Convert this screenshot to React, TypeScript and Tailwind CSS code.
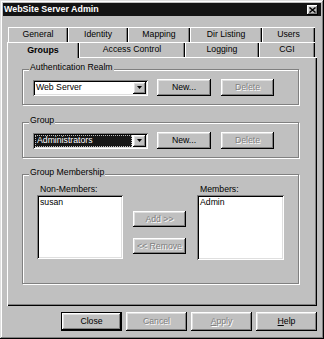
import React from "react";

const RAISED =
  "shadow-[inset_-1px_-1px_0_#000,inset_1px_1px_0_#fff,inset_-2px_-2px_0_#808080,inset_2px_2px_0_#dfdfdf]";
const SUNKEN =
  "shadow-[inset_1px_1px_0_#808080,inset_-1px_-1px_0_#fff,inset_2px_2px_0_#000,inset_-2px_-2px_0_#dfdfdf]";
const WIN =
  "shadow-[inset_-1px_-1px_0_#000,inset_1px_1px_0_#dfdfdf,inset_-2px_-2px_0_#808080,inset_2px_2px_0_#fff]";
const TAB =
  "shadow-[inset_1px_1px_0_#fff,inset_-1px_0_0_#000,inset_-2px_0_0_#808080]";
const PANEL =
  "shadow-[inset_1px_1px_0_#fff,inset_-1px_-1px_0_#000,inset_-2px_-2px_0_#808080]";
const DIS = "text-[#808080] [text-shadow:1px_1px_0_#fff]";

function Btn({
  label,
  w,
  h,
  disabled,
}: {
  label: React.ReactNode;
  w: string;
  h: string;
  disabled?: boolean;
}) {
  return (
    <div
      className={`${w} ${h} bg-[#c0c0c0] ${RAISED} flex items-center justify-center leading-none ${
        disabled ? DIS : "text-black"
      }`}
    >
      {label}
    </div>
  );
}

function Combo({ text, selected }: { text: string; selected?: boolean }) {
  return (
    <div className={`w-[115px] h-[16px] bg-white ${SUNKEN} p-[2px] flex items-stretch`}>
      <div className="flex-1 flex items-center pr-[1px]">
        {selected ? (
          <div className="w-full h-full bg-[#161616] text-white border border-dotted border-[#bdbdbd] flex items-center pl-[1px] leading-none">
            {text}
          </div>
        ) : (
          <span className="pl-[1px] leading-none">{text}</span>
        )}
      </div>
      <div className={`w-[13px] bg-[#c0c0c0] ${RAISED} flex items-center justify-center`}>
        <svg width="5" height="3" viewBox="0 0 5 3">
          <path d="M0 0 H5 L2.5 3 Z" fill="#000" />
        </svg>
      </div>
    </div>
  );
}

function Group({
  label,
  h,
  mt,
  children,
}: {
  label: string;
  h: string;
  mt: string;
  children: React.ReactNode;
}) {
  return (
    <div
      className={`relative w-[277px] ${h} ${mt} border border-[#808080] shadow-[inset_1px_1px_0_#fff,1px_1px_0_#fff]`}
    >
      <span className="absolute left-[6px] top-[-7px] px-[1px] bg-[#c0c0c0] leading-none">
        {label}
      </span>
      {children}
    </div>
  );
}

export default function App() {
  const row1: [string, string][] = [
    ["General", "w-[60px]"],
    ["Identity", "w-[60px]"],
    ["Mapping", "w-[62px]"],
    ["Dir Listing", "w-[72px]"],
    ["Users", "w-[53px]"],
  ];
  const row2: [string, string][] = [
    ["Access Control", "w-[106px]"],
    ["Logging", "w-[74px]"],
    ["CGI", "w-[56px]"],
  ];
  return (
    <div
      className={`w-[324px] h-[339px] bg-[#c0c0c0] p-[3px] flex flex-col font-['Liberation_Sans',Arial,sans-serif] text-[8.7px] text-black ${WIN}`}
    >
      <div className="h-[13px] bg-[#141414] flex items-center justify-between pl-[1px] pr-[3px]">
        <span className="text-white font-bold text-[8.9px] leading-none">
          WebSite Server Admin
        </span>
        <div className={`w-[11px] h-[10px] bg-[#c0c0c0] ${RAISED} flex items-center justify-center`}>
          <svg width="7" height="6" viewBox="0 0 7 6">
            <path d="M0.5 0.5 L6.5 5.5 M6.5 0.5 L0.5 5.5" stroke="#000" strokeWidth="1.4" />
          </svg>
        </div>
      </div>

      <div className="ml-[4px] mt-[11px] w-[310px] flex flex-col">
        <div className="flex h-[15px] pl-[1px]">
          {row1.map(([t, w]) => (
            <div key={t} className={`${w} h-full ${TAB} flex items-center justify-center leading-none`}>
              {t}
            </div>
          ))}
        </div>
        <div className="flex h-[15px] items-start">
          <div
            className={`relative z-10 w-[72px] h-[16px] bg-[#c0c0c0] ${TAB} flex items-center justify-center font-bold leading-none text-[8.9px]`}
          >
            Groups
          </div>
          {row2.map(([t, w]) => (
            <div key={t} className={`${w} h-full ${TAB} flex items-center justify-center leading-none`}>
              {t}
            </div>
          ))}
        </div>
        <div className={`h-[249px] ${PANEL} pt-[12px] pl-[15px] flex flex-col`}>
          <Group label="Authentication Realm" h="h-[36px]" mt="mt-0">
            <div className="pl-[10px] pt-[9px] flex items-center h-[26px]">
              <Combo text="Web Server" />
              <div className="ml-[9px]">
                <Btn label="New..." w="w-[54px]" h="h-[17px]" />
              </div>
              <div className="ml-[10px]">
                <Btn label="Delete" w="w-[53px]" h="h-[17px]" disabled />
              </div>
            </div>
          </Group>
          <Group label="Group" h="h-[36px]" mt="mt-[17px]">
            <div className="pl-[10px] pt-[9px] flex items-center h-[26px]">
              <Combo text="Administrators" selected />
              <div className="ml-[9px]">
                <Btn label="New..." w="w-[54px]" h="h-[17px]" />
              </div>
              <div className="ml-[10px]">
                <Btn label="Delete" w="w-[53px]" h="h-[17px]" disabled />
              </div>
            </div>
          </Group>
          <Group label="Group Membership" h="h-[110px]" mt="mt-[16px]">
            <div className="pl-[14px] pt-[9px] flex">
              <div className="flex flex-col">
                <div className="h-[11px] pl-[3px] leading-none flex items-center">Non-Members:</div>
                <div className={`w-[86px] h-[64px] bg-white ${SUNKEN} pl-[3px] pt-[3px] leading-none`}>
                  susan
                </div>
              </div>
              <div className="ml-[10px] pt-[27px] flex flex-col gap-[11px]">
                <Btn label="Add >>" w="w-[53px]" h="h-[16px]" disabled />
                <Btn label="<< Remove" w="w-[53px]" h="h-[16px]" disabled />
              </div>
              <div className="ml-[11px] flex flex-col">
                <div className="h-[11px] pl-[3px] leading-none flex items-center">Members:</div>
                <div className={`w-[87px] h-[65px] bg-white ${SUNKEN} pl-[3px] pt-[3px] leading-none`}>
                  Admin
                </div>
              </div>
            </div>
          </Group>
        </div>
      </div>

      <div className="mt-[6px] flex justify-end gap-[4px] pr-[4px]">
        <div className="w-[61px] h-[19px] border border-black flex">
          <div className={`flex-1 bg-[#c0c0c0] ${RAISED} flex items-center justify-center leading-none`}>
            Close
          </div>
        </div>
        <Btn label="Cancel" w="w-[61px]" h="h-[19px]" disabled />
        <Btn
          label={
            <span>
              <span className="underline">A</span>pply
            </span>
          }
          w="w-[61px]"
          h="h-[19px]"
          disabled
        />
        <Btn
          label={
            <span>
              <span className="underline">H</span>elp
            </span>
          }
          w="w-[61px]"
          h="h-[19px]"
        />
      </div>
    </div>
  );
}
